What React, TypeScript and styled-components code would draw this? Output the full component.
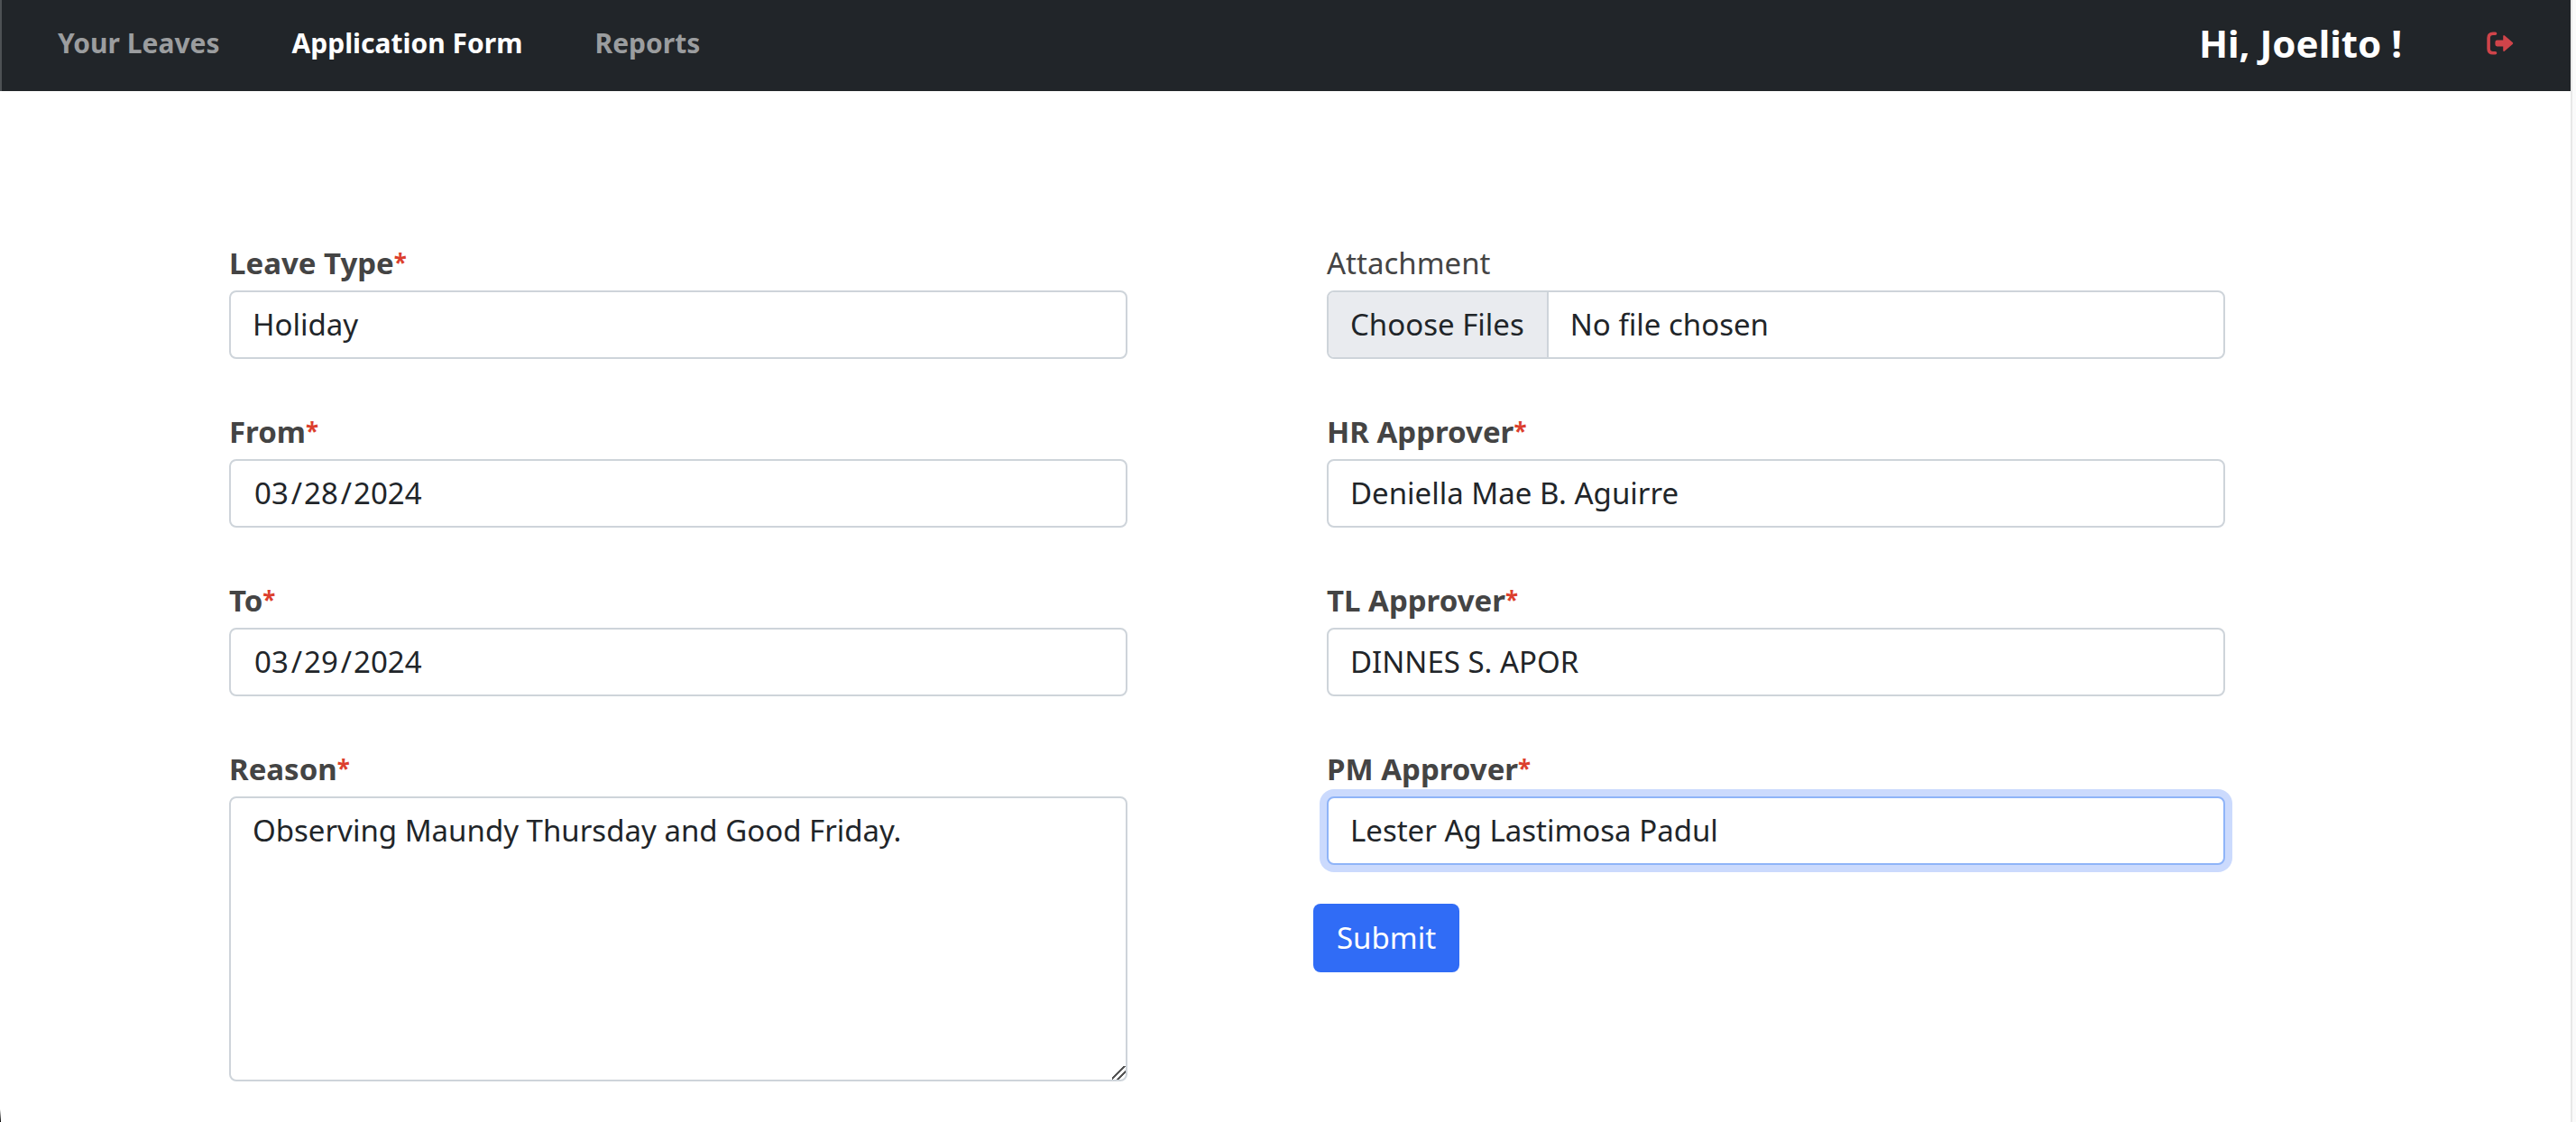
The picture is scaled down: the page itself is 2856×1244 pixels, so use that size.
import React from "react";
import styled, { createGlobalStyle, css } from "styled-components";

const GlobalStyle = createGlobalStyle`
  *, *::before, *::after { box-sizing: border-box; }
  html { scrollbar-width: none; background: #fafafa; }
  body {
    margin: 0;
    color: #212529;
    font-family: "Noto Sans", "Open Sans", sans-serif;
    font-size: 33px;
    line-height: 48px;
  }
`;

const Page = styled.div`
  min-height: 100vh;
  margin-right: 4px;
  border-right: 2px solid #e8e8e8;
  background: linear-gradient(#fff, #000) left bottom / 1px 14px no-repeat, #fff;
`;

const NavBar = styled.header`
  display: flex;
  align-items: center;
  justify-content: space-between;
  height: 101px;
  padding: 0 62px 6px;
  background: #212529;
  border-left: 2px solid #4d5154;
`;

const NavLinks = styled.nav`
  display: flex;
  gap: 80px;
`;

const NavLink = styled.a<{ $active?: boolean }>`
  color: ${({ $active }) => ($active ? "#fff" : "#9b9d9f")};
  font-size: 30px;
  font-weight: 700;
  text-decoration: none;
`;

const Account = styled.div`
  display: flex;
  align-items: center;
  gap: 94px;
`;

const Greeting = styled.span`
  color: #fff;
  font-size: 42px;
  font-weight: 700;
`;

const LogoutButton = styled.button`
  display: flex;
  padding: 0;
  border: 0;
  background: none;
  color: #cf444a;
  cursor: pointer;
`;

const Form = styled.form`
  display: grid;
  grid-template-columns: 1fr 1fr;
  column-gap: 221px;
  padding: 167px 383px 45px 254px;
`;

const Column = styled.div`
  display: flex;
  flex-direction: column;
  gap: 57px;
`;

const Field = styled.div`
  display: flex;
  flex-direction: column;
  gap: 6px;
`;

const Label = styled.label<{ $plain?: boolean }>`
  color: #444;
  font-weight: ${({ $plain }) => ($plain ? 400 : 700)};
`;

const Required = styled.span`
  color: #dc3f2e;
  font-size: 26px;
  line-height: 26px;
  vertical-align: 3px;
`;

const control = css`
  display: block;
  width: 100%;
  margin: 0;
  border: 2px solid #ced4da;
  border-radius: 8px;
  background: #fff;
  color: #212529;
  font: inherit;
  outline: 0;
`;

const TextInput = styled.input<{ $focused?: boolean }>`
  ${control}
  height: 76px;
  padding: 0 24px 1px;
  ${({ $focused }) =>
    $focused &&
    css`
      border-color: #8fb4f8;
      box-shadow: 0 0 0 8px #cbdafd;
    `}

  &::-webkit-calendar-picker-indicator {
    display: none;
  }
  &::-webkit-datetime-edit-month-field,
  &::-webkit-datetime-edit-day-field,
  &::-webkit-datetime-edit-year-field {
    padding: 0 3px 0 2px;
  }
`;

const FileInput = styled.input`
  ${control}
  height: 76px;
  line-height: 72px;
  overflow: hidden;

  &::file-selector-button {
    height: 72px;
    margin: 0 24px 0 0;
    padding: 0 25px 0 24px;
    border: 0;
    border-right: 2px solid #ced4da;
    background: #e9ebef;
    color: #212529;
    font: inherit;
  }
`;

const TextArea = styled.textarea`
  ${control}
  height: 316px;
  padding: 12px 24px;
  resize: vertical;

  &::-webkit-resizer {
    background: linear-gradient(
      135deg,
      transparent 9px,
      #555 9px 11px,
      transparent 11px 14px,
      #555 14px 16px,
      transparent 16px
    );
  }
`;

const SubmitButton = styled.button`
  align-self: flex-start;
  height: 76px;
  margin: -14px 0 0 -15px;
  padding: 0 26px;
  border: 0;
  border-radius: 8px;
  background: #306cf6;
  color: #fff;
  font: inherit;
  cursor: pointer;
`;

type FieldProps = { id: string; label: string; children: React.ReactNode; optional?: boolean };

function FormField({ id, label, children, optional }: FieldProps) {
  return (
    <Field>
      <Label htmlFor={id} $plain={optional}>
        {label}
        {!optional && <Required>*</Required>}
      </Label>
      {children}
    </Field>
  );
}

function LogoutIcon() {
  return (
    <svg width="31" height="26" viewBox="0 0 31 26" fill="currentColor" aria-hidden="true">
      <path d="M9.500 2.200H7Q2.100 2.200 2.100 7V19Q2.100 23.800 7 23.800H9.500" fill="none" stroke="currentColor" strokeWidth="3.600" strokeLinecap="round" />
      <path d="M11.500 9.600H18.200V5.600Q18.200 3.200 20 4.600L28.700 12Q29.900 13 28.700 14L20 21.400Q18.200 22.800 18.200 20.400V16.400H11.500Q9.400 16.400 9.400 14.300V11.700Q9.400 9.600 11.500 9.600Z" />
    </svg>
  );
}

export default function App() {
  return (
    <Page>
      <GlobalStyle />
      <NavBar>
        <NavLinks>
          <NavLink href="#leaves">Your Leaves</NavLink>
          <NavLink href="#application" $active aria-current="page">Application Form</NavLink>
          <NavLink href="#reports">Reports</NavLink>
        </NavLinks>
        <Account>
          <Greeting>Hi, Joelito !</Greeting>
          <LogoutButton type="button" aria-label="Log out">
            <LogoutIcon />
          </LogoutButton>
        </Account>
      </NavBar>
      <Form onSubmit={(event) => event.preventDefault()}>
        <Column>
          <FormField id="leave-type" label="Leave Type">
            <TextInput id="leave-type" defaultValue="Holiday" />
          </FormField>
          <FormField id="from" label="From">
            <TextInput id="from" type="date" defaultValue="2024-03-28" />
          </FormField>
          <FormField id="to" label="To">
            <TextInput id="to" type="date" defaultValue="2024-03-29" />
          </FormField>
          <FormField id="reason" label="Reason">
            <TextArea id="reason" defaultValue="Observing Maundy Thursday and Good Friday." />
          </FormField>
        </Column>
        <Column>
          <FormField id="attachment" label="Attachment" optional>
            <FileInput id="attachment" type="file" multiple />
          </FormField>
          <FormField id="hr" label="HR Approver">
            <TextInput id="hr" defaultValue="Deniella Mae B. Aguirre" />
          </FormField>
          <FormField id="tl" label="TL Approver">
            <TextInput id="tl" defaultValue="DINNES S. APOR" />
          </FormField>
          <FormField id="pm" label="PM Approver">
            <TextInput id="pm" defaultValue="Lester Ag Lastimosa Padul" $focused />
          </FormField>
          <SubmitButton type="submit">Submit</SubmitButton>
        </Column>
      </Form>
    </Page>
  );
}
